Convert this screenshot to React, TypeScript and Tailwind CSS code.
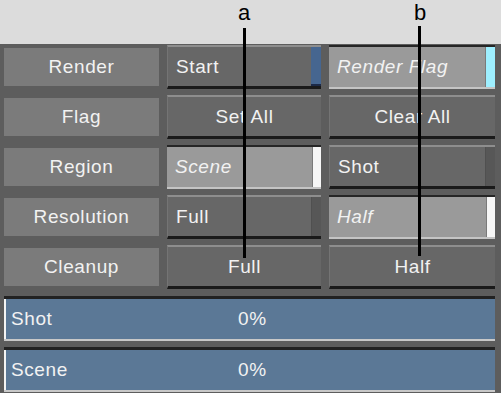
import React from "react";

type Field = {
  text: string;
  on?: boolean;
  center?: boolean;
  strip?: "blue" | "cyan" | "white" | "dark" | "none";
};

const rows: { label: string; a: Field; b: Field }[] = [
  { label: "Render", a: { text: "Start", strip: "blue" }, b: { text: "Render Flag", on: true, strip: "cyan" } },
  { label: "Flag", a: { text: "Set All", center: true }, b: { text: "Clear All", center: true } },
  { label: "Region", a: { text: "Scene", on: true, strip: "white" }, b: { text: "Shot", strip: "dark" } },
  { label: "Resolution", a: { text: "Full", strip: "dark" }, b: { text: "Half", on: true, strip: "white" } },
  { label: "Cleanup", a: { text: "Full", center: true }, b: { text: "Half", center: true } },
];

const font = "font-['Liberation_Sans',Arial,sans-serif] text-[19px] tracking-[0.6px]";

function Strip({ kind }: { kind?: Field["strip"] }) {
  if (!kind || kind === "none") return null;
  if (kind === "blue")
    return (
      <div className="w-[10px] flex flex-col">
        <div className="flex-1 bg-[#466690]" />
        <div className="h-[2px] bg-[#1c2a48]" />
      </div>
    );
  if (kind === "cyan") return <div className="w-[10px] bg-[#9eefff] border-l border-[#7a7a7a]" />;
  if (kind === "white") return <div className="w-[9px] bg-[#f6f6f6] border-l border-[#7a7a7a]" />;
  return <div className="w-[10px] bg-[#575757] border-l border-[#505050]" />;
}

function Button({ f, width }: { f: Field; width: string }) {
  const shell = f.on
    ? "border-t-2 border-[#262626] border-b-2 border-b-[#c4c4c4] bg-[#9a9a9a]"
    : "border-t-2 border-t-[#8e8e8e] border-b-[3px] border-b-[#1a1a1a] border-l border-l-[#747474] bg-[#676767]";
  return (
    <div className={`${width} h-full flex ${shell}`}>
      <div
        className={`flex-1 flex items-center pt-[1px] ${f.center ? "justify-center" : "pl-[8px]"} text-[#f2f2f2] ${font} ${
          f.on ? "italic" : ""
        }`}
      >
        {f.text}
      </div>
      <Strip kind={f.strip} />
    </div>
  );
}

function Bar({ label }: { label: string }) {
  return (
    <div className="h-[45px] flex flex-col">
      <div className="h-[3px] bg-[#222222]" />
      <div className={`flex-1 flex items-center bg-[#5b7896] border-l-2 border-[#f4f4f4] text-[#f2f2f2] ${font}`}>
        <span className="w-[232px] pl-[5px]">{label}</span>
        <span>0%</span>
      </div>
      <div className="h-[2px] bg-[#c8c8c8]" />
    </div>
  );
}

export default function App() {
  return (
    <div className="relative w-[501px] h-[393px] overflow-hidden bg-[#dcdcdc]">
      <div className="h-[44px]" />
      <div className="h-[349px] bg-[#5d5d5d] pt-[1px] pl-[4px] pr-[6px] flex flex-col gap-[6px]">
        {rows.map((r) => (
          <div key={r.label} className="h-[44px] flex gap-[8px]">
            <div className={`w-[155px] my-[3px] pt-[1px] bg-[#7b7b7b] flex items-center justify-center text-[#f2f2f2] ${font}`}>
              {r.label}
            </div>
            <Button f={r.a} width="w-[154px]" />
            <Button f={r.b} width="w-[166px]" />
          </div>
        ))}
        <div className="mt-[1px] flex flex-col gap-[6px]">
          <Bar label="Shot" />
          <Bar label="Scene" />
        </div>
      </div>

      {/* callouts */}
      <div className="absolute left-[236px] top-[1px] w-[16px] text-center text-black font-['Liberation_Sans',Arial,sans-serif] text-[22px] leading-[24px]">
        a
      </div>
      <div className="absolute left-[243px] top-[28px] w-[3px] h-[230px] bg-black" />
      <div className="absolute left-[412px] top-[1px] w-[16px] text-center text-black font-['Liberation_Sans',Arial,sans-serif] text-[22px] leading-[24px]">
        b
      </div>
      <div className="absolute left-[418px] top-[26px] w-[3px] h-[230px] bg-black" />
    </div>
  );
}
